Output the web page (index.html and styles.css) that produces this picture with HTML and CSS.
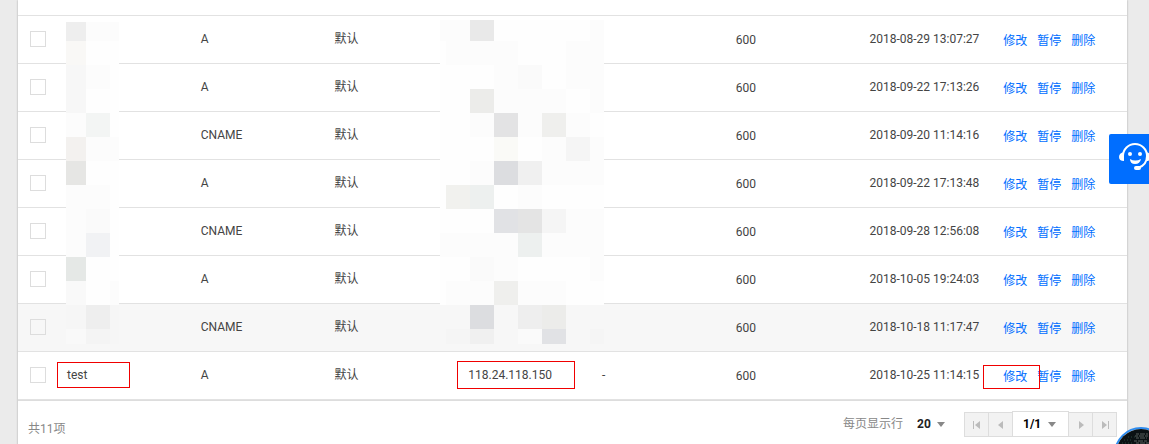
FILE: index.html
```
<!DOCTYPE html>
<html lang="zh-CN">
<head>
    <meta charset="UTF-8">
    <meta name="viewport" content="width=device-width, initial-scale=1.0">
    <title>记录管理</title>
    <link rel="stylesheet" href="styles.css">
</head>
<body>
    <main class="panel">
        <div class="panel-head"></div>
        <table class="records">
            <colgroup>
                <col class="col-check">
                <col span="8">
            </colgroup>
            <tbody>
                <tr>
                    <td><input type="checkbox" aria-label="选择记录"></td>
                    <td class="masked">
                        <svg class="mask mask-name" width="53" height="322" viewBox="66 22 53 322" shape-rendering="crispEdges" aria-hidden="true">
                            <path fill="#fefefe" d="M66 22h53v283H66z"/>
                            <path fill="#f6f6f6" d="M66 305h53v39H66z"/>
                            <path fill="#eeeeee" d="M66 22h20v19H66z"/>
                            <path fill="#fcfcfc" d="M86 22h33v19H86zM86 65h24v24H86zM66 113h20v24H66zM86 137h33v24H86zM66 185h44v24H66zM66 209h20v48H66zM110 281h9v24h-9z"/>
                            <path fill="#f9f8f6" d="M66 41h20v24H66z"/>
                            <path fill="#f7f7f7" d="M66 65h20v48H66z"/>
                            <path fill="#f3f5f4" d="M86 113h24v24H86z"/>
                            <path fill="#f3f1ef" d="M66 137h20v24H66z"/>
                            <path fill="#e6e6e4" d="M66 161h20v24H66z"/>
                            <path fill="#fafafa" d="M86 209h24v24H86z"/>
                            <path fill="#f1f2f4" d="M86 233h24v24H86z"/>
                            <path fill="#e5e8e6" d="M66 257h20v24H66z"/>
                            <path fill="#f9f9f9" d="M66 281h20v24H66zM66 329h20v15H66z"/>
                            <path fill="#eeeeee" d="M86 305h24v24H86z"/>
                            <path fill="#f4f4f4" d="M86 329h24v15H86z"/>
                        </svg>
                    </td>
                    <td>A</td>
                    <td>默认</td>
                    <td class="masked">
                        <svg class="mask mask-value" width="164" height="324" viewBox="440 20 164 324" shape-rendering="crispEdges" aria-hidden="true">
                            <path fill="#fefefe" d="M440 20h164v285H440z"/>
                            <path fill="#f7f7f7" d="M440 305h164v39H440z"/>
                            <path fill="#fcfcfc" d="M440 20h30v21h-30zM590 20h14v21h-14zM446 41h72v24h-72zM566 41h38v48h-38zM494 65h24v24h-24zM494 89h72v24h-72zM590 89h14v24h-14zM470 113h24v24h-24zM518 113h24v24h-24zM566 113h24v24h-24zM542 137h24v24h-24zM590 137h14v24h-14zM470 161h24v24h-24zM542 161h62v24h-62zM518 185h24v24h-24zM566 209h38v24h-38zM440 233h78v24h-78zM542 233h62v24h-62zM494 257h24v24h-24zM590 257h14v24h-14zM446 281h48v24h-48zM518 281h48v24h-48z"/>
                            <path fill="#e9e9e9" d="M470 20h24v21h-24z"/>
                            <path fill="#fafafa" d="M518 65h24v24h-24zM470 257h24v24h-24zM518 329h24v15h-24z"/>
                            <path fill="#ececea" d="M470 89h24v24h-24zM542 305h24v24h-24z"/>
                            <path fill="#e3e3e4" d="M494 113h24v24h-24z"/>
                            <path fill="#efefed" d="M542 113h24v24h-24zM494 281h24v24h-24z"/>
                            <path fill="#fafaf7" d="M494 137h24v24h-24z"/>
                            <path fill="#f5f5f5" d="M566 137h24v24h-24zM542 209h24v24h-24zM446 329h24v15h-24zM590 329h14v15h-14z"/>
                            <path fill="#dcdde0" d="M494 161h24v24h-24zM470 305h24v24h-24z"/>
                            <path fill="#f0f0f0" d="M518 161h24v24h-24zM470 329h24v15h-24z"/>
                            <path fill="#f1f1ee" d="M446 185h24v24h-24z"/>
                            <path fill="#edf0ef" d="M470 185h24v24h-24zM518 233h24v24h-24z"/>
                            <path fill="#e1e2e5" d="M494 209h24v24h-24zM542 329h24v15h-24z"/>
                            <path fill="#e4e4e4" d="M518 209h24v24h-24z"/>
                            <path fill="#eeeeee" d="M518 305h24v24h-24z"/>
                        </svg>
                    </td>
                    <td></td>
                    <td class="low">600</td>
                    <td>2018-08-29 13:07:27</td>
                    <td class="actions"><a href="#">修改</a><a href="#">暂停</a><a href="#">删除</a></td>
                </tr>
                <tr>
                    <td><input type="checkbox" aria-label="选择记录"></td>
                    <td></td>
                    <td>A</td>
                    <td>默认</td>
                    <td></td>
                    <td></td>
                    <td class="low">600</td>
                    <td>2018-09-22 17:13:26</td>
                    <td class="actions"><a href="#">修改</a><a href="#">暂停</a><a href="#">删除</a></td>
                </tr>
                <tr>
                    <td><input type="checkbox" aria-label="选择记录"></td>
                    <td></td>
                    <td>CNAME</td>
                    <td>默认</td>
                    <td></td>
                    <td></td>
                    <td class="low">600</td>
                    <td>2018-09-20 11:14:16</td>
                    <td class="actions"><a href="#">修改</a><a href="#">暂停</a><a href="#">删除</a></td>
                </tr>
                <tr>
                    <td><input type="checkbox" aria-label="选择记录"></td>
                    <td></td>
                    <td>A</td>
                    <td>默认</td>
                    <td></td>
                    <td></td>
                    <td class="low">600</td>
                    <td>2018-09-22 17:13:48</td>
                    <td class="actions"><a href="#">修改</a><a href="#">暂停</a><a href="#">删除</a></td>
                </tr>
                <tr>
                    <td><input type="checkbox" aria-label="选择记录"></td>
                    <td></td>
                    <td>CNAME</td>
                    <td>默认</td>
                    <td></td>
                    <td></td>
                    <td class="low">600</td>
                    <td>2018-09-28 12:56:08</td>
                    <td class="actions"><a href="#">修改</a><a href="#">暂停</a><a href="#">删除</a></td>
                </tr>
                <tr>
                    <td><input type="checkbox" aria-label="选择记录"></td>
                    <td></td>
                    <td>A</td>
                    <td>默认</td>
                    <td></td>
                    <td></td>
                    <td class="low">600</td>
                    <td>2018-10-05 19:24:03</td>
                    <td class="actions"><a href="#">修改</a><a href="#">暂停</a><a href="#">删除</a></td>
                </tr>
                <tr class="active">
                    <td><input type="checkbox" aria-label="选择记录"></td>
                    <td></td>
                    <td>CNAME</td>
                    <td>默认</td>
                    <td></td>
                    <td></td>
                    <td class="low">600</td>
                    <td>2018-10-18 11:17:47</td>
                    <td class="actions"><a href="#">修改</a><a href="#">暂停</a><a href="#">删除</a></td>
                </tr>
                <tr>
                    <td><input type="checkbox" aria-label="选择记录"></td>
                    <td class="masked">test<span class="mark mark-name"></span></td>
                    <td>A</td>
                    <td>默认</td>
                    <td class="masked">118.24.118.150<span class="mark mark-value"></span></td>
                    <td>-</td>
                    <td class="low">600</td>
                    <td>2018-10-25 11:14:15</td>
                    <td class="actions masked"><a href="#">修改</a><a href="#">暂停</a><a href="#">删除</a><span class="mark mark-edit"></span></td>
                </tr>
            </tbody>
        </table>
        <div class="footer">
            <span class="total">共11项</span>
            <label class="size-label" for="pageSize">每页显示行</label>
            <span class="select size-select">
                <select id="pageSize">
                    <option>20</option>
                </select>
            </span>
            <div class="pager">
                <button type="button" aria-label="首页"><svg width="8" height="8" viewBox="0 0 8 8"><path d="M0 0h1v8H0zM7 0v8L2 4z"/></svg></button>
                <button type="button" aria-label="上一页"><svg width="8" height="8" viewBox="0 0 8 8"><path d="M6 0v8L1 4z"/></svg></button>
                <span class="select page-select">
                    <select aria-label="页码">
                        <option>1/1</option>
                    </select>
                </span>
                <button type="button" aria-label="下一页"><svg width="8" height="8" viewBox="0 0 8 8"><path d="M2 0v8l5-4z"/></svg></button>
                <button type="button" aria-label="末页"><svg width="8" height="8" viewBox="0 0 8 8"><path d="M1 0v8l5-4zM7 0h1v8H7z"/></svg></button>
            </div>
        </div>
    </main>

    <button type="button" class="service" aria-label="在线客服">
        <svg width="32" height="30" viewBox="0 0 32 30">
            <path fill="none" stroke="#fff" stroke-width="2" d="M4 13a12 12 0 0 1 24 0q0 9-9 12"/>
            <path fill="#fff" d="M5 9v9q-5 0-5-4t5-5zM27 9v9q5 0 5-4t-5-5z"/>
            <rect fill="#fff" x="15" y="23" width="7" height="4" rx="2"/>
            <circle fill="#fff" cx="11" cy="11" r="2"/>
            <circle fill="#fff" cx="21" cy="11" r="2"/>
            <path fill="#fff" d="M11 16q5 3 11 0-1 5-6 5t-5-5z"/>
        </svg>
    </button>

    <div class="bubble">
        <svg width="50" height="50" viewBox="0 0 50 50" aria-hidden="true">
            <rect width="50" height="50" fill="#0b1113"/>
            <path stroke="#59605f" stroke-dasharray="3 1 5 1" d="M20 5h12M19 7h14M20 9h11M18 12h14M20 14h13"/>
            <path stroke="#29453a" stroke-dasharray="1 2" d="M12 8h7M8 11h9M6 14h12M34 9h8M34 12h10"/>
        </svg>
    </div>
</body>
</html>
```

FILE: styles.css
```
* {
    box-sizing: border-box;
}
body {
    margin: 0;
    min-height: 100vh;
    display: flex;
    padding: 0 22px 0 18px;
    background-color: #ebebeb;
    color: #444;
    font-family: Roboto, "Noto Sans CJK SC", sans-serif;
    font-size: 12px;
    line-height: 18px;
}
.panel {
    flex: 1;
    background: white;
    box-shadow: 0 0 2px rgba(0, 0, 0, 0.3);
}
.panel-head {
    height: 16px;
    border-bottom: 1px solid #e2e2e2;
}
.records {
    width: 100%;
    table-layout: fixed;
    border-collapse: separate;
    border-spacing: 0;
    border-bottom: 1px solid #ddd;
}
.col-check {
    width: 39px;
}
.records td {
    height: 48px;
    padding: 0 10px 2px;
    border-bottom: 1px solid #e2e2e2;
    white-space: nowrap;
}
.records td.low {
    padding-bottom: 0;
}
.records td.actions {
    padding-top: 2px;
    padding-bottom: 0;
}
.records td:first-child {
    padding: 0 0 2px 12px;
}
.records .active td {
    background-color: #f7f7f7;
}
input {
    appearance: none;
    display: block;
    width: 16px;
    height: 16px;
    margin: 0;
    border: 1px solid #ddd;
}
a {
    color: #006eff;
    text-decoration: none;
    margin-right: 10px;
}

/* overlays that lie on top of the cells */
.masked {
    position: relative;
}
.mask,
.mark {
    position: absolute;
    pointer-events: none;
}
.mask-name {
    top: 6px;
    left: 9px;
}
.mask-value {
    top: 4px;
    left: -18px;
}
.mark {
    border: 1px solid #f00000;
}
.mark-name {
    top: 10px;
    left: 0;
    width: 73px;
    height: 26px;
}
.mark-value {
    top: 9px;
    left: -1px;
    width: 118px;
    height: 28px;
}
.mark-edit {
    top: 13px;
    left: -10px;
    width: 57px;
    height: 24px;
}

.footer {
    display: flex;
    align-items: flex-start;
    padding: 10px 10px 8px;
    color: #888;
}
.total {
    margin-right: auto;
    padding-top: 9px;
}
.size-label {
    padding-top: 4px;
}
select {
    appearance: none;
    border: 0;
    padding: 0;
    background: none;
    color: #222;
    font: bold 12px/24px Roboto, sans-serif;
}
.select {
    display: flex;
    align-items: center;
    gap: 6px;
    height: 26px;
}
.select::after {
    content: "";
    border: 4px solid transparent;
    border-top: 5px solid #888;
    border-bottom: 0;
}
.size-select {
    margin: 0 19px 0 14px;
}
.pager {
    display: flex;
    align-items: flex-end;
}
.pager button {
    width: 25px;
    height: 25px;
    padding: 0;
    border: 1px solid #ddd;
    background-color: #f2f2f2;
}
.pager button + button {
    margin-left: -1px;
}
.pager button svg {
    display: block;
    margin: auto;
    fill: #bbb;
}
.page-select {
    padding: 0 12px 0 10px;
    margin: 0 -1px;
    border: 1px solid #ddd;
    background-color: white;
}
.page-select select {
    color: #000;
}

.service {
    position: fixed;
    top: 134px;
    right: 0;
    display: flex;
    align-items: flex-start;
    width: 40px;
    height: 50px;
    padding: 9px 0 0 10px;
    border: 0;
    border-radius: 2px 0 0 2px;
    background-color: #006eff;
    overflow: hidden;
}
.service svg {
    flex: none;
}
.bubble {
    position: fixed;
    right: -19px;
    bottom: -37px;
    width: 54px;
    height: 54px;
    border: 2px solid #2d8cf0;
    border-radius: 50%;
    overflow: hidden;
}
```
